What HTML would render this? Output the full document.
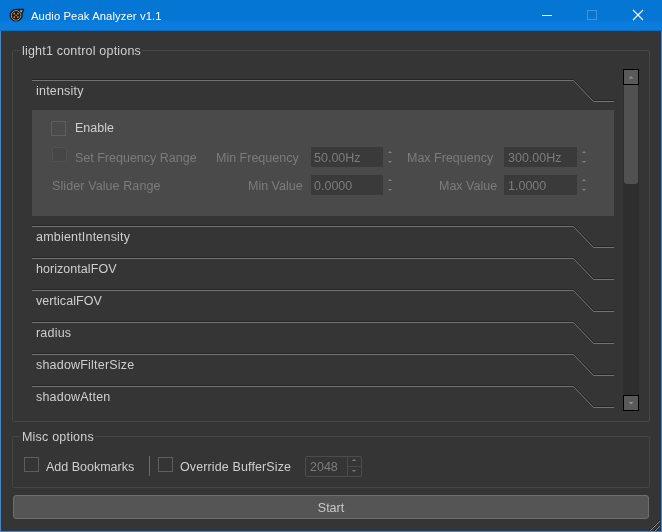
<!DOCTYPE html>
<html><head><meta charset="utf-8">
<style>
*{box-sizing:border-box;margin:0;padding:0}
html,body{width:662px;height:532px;overflow:hidden;background:#353535}
body{position:relative;font-family:"Liberation Sans",sans-serif;font-size:12.5px;color:#cfcfcf}
.a{position:absolute}
.t{position:absolute;white-space:nowrap;line-height:15px;will-change:transform}
.ls{letter-spacing:0.2px}
.dis{color:#7c7c7c}
#titlebar{left:0;top:0;width:662px;height:31px;background:linear-gradient(#0676d5 0,#0676d5 18px,#0a7ddf 24px,#0a7ddf 30px,#145a90 31px)}
#title{left:31px;top:5.5px;color:#fff;font-size:11.25px;line-height:20px;letter-spacing:0.1px}
.bl{background:#4e4e4e}
.hl{background:#8a8a8a}
.cb{position:absolute;width:15px;height:15px;border:1px solid #5e5e5e}
.spin{position:absolute;background:#3a3a3a;color:#8c8c8c}
.arr{position:absolute;width:0;height:0;border-left:2px solid transparent;border-right:2px solid transparent}
.up{border-bottom:2px solid #808080}
.dn{border-top:2px solid #808080}
</style></head><body>
<!-- window borders -->
<div class="a" style="left:0;top:0;width:1px;height:532px;background:#4a86bc"></div>
<div class="a" style="left:1px;top:31px;width:1px;height:500px;background:#1c3a58"></div>
<div class="a" style="left:661px;top:0;width:1px;height:532px;background:#4a86bc"></div>
<div class="a" style="left:660px;top:31px;width:1px;height:500px;background:#1c3a58"></div>
<div class="a" style="left:0;top:531px;width:662px;height:1px;background:#4a86bc"></div>
<div class="a" style="left:1px;top:530px;width:660px;height:1px;background:#1c3a58"></div>
<!-- title bar -->
<div id="titlebar" class="a"></div>
<svg class="a" style="left:0;top:0" width="30" height="30" viewBox="0 0 30 30">
  <path d="M9.6 15.6 C9.6 11.7 12.5 8.8 16.2 8.8 L24.2 8.8 C24.1 10.8 23.4 12.2 22.5 13.4 C22.7 14.1 22.7 14.8 22.7 15.6 C22.7 19.2 19.7 21.6 16.1 21.6 C12.5 21.6 9.6 19.2 9.6 15.6 Z" fill="#0b1a30"/>
  <circle cx="16.1" cy="15.4" r="4.7" fill="none" stroke="#b4ae94" stroke-width="1"/>
  <path d="M19.5 10.6 L22.6 10.2 L21.3 12.6 Z" fill="#d8c8a0"/>
  <circle cx="16.1" cy="15.4" r="4.2" fill="#22160a"/>
  <circle cx="14.3" cy="13.7" r="0.85" fill="#d89a40"/><circle cx="17.9" cy="13.7" r="0.85" fill="#d89a40"/>
  <circle cx="14.3" cy="17.1" r="0.85" fill="#d89a40"/><circle cx="17.9" cy="17.1" r="0.85" fill="#d89a40"/>
  <circle cx="16.1" cy="15.4" r="0.75" fill="#d89838"/>
</svg>
<div id="title" class="t">Audio Peak Analyzer v1.1</div>
<!-- min / max / close -->
<div class="a" style="left:542px;top:15px;width:10px;height:1px;background:#fff"></div>
<div class="a" style="left:587px;top:10px;width:10px;height:10px;border:1px solid #3f95de"></div>
<svg class="a" style="left:632px;top:9px" width="12" height="12" viewBox="0 0 12 12"><path d="M1 1 L11 11 M11 1 L1 11" stroke="#fff" stroke-width="1.1"/></svg>

<!-- group 1 frame -->
<div class="a" style="left:12px;top:50px;width:638px;height:372px;border:1px solid #464646;border-radius:2px"></div>
<div class="a" style="left:20px;top:46px;width:122px;height:8px;background:#353535"></div>
<div class="t ls" style="left:22px;top:44px">light1 control options</div>

<!-- headers -->
<svg class="a" style="left:0;top:0" width="662" height="532">
  <g fill="none" stroke="#262626" stroke-width="1"><path d="M32 79.5 H573.5 L594 100.5 H614"/><path d="M32 225.5 H573.5 L594 246.5 H614"/><path d="M32 257.5 H573.5 L594 278.5 H614"/><path d="M32 289.5 H573.5 L594 310.5 H614"/><path d="M32 321.5 H573.5 L594 342.5 H614"/><path d="M32 353.5 H573.5 L594 374.5 H614"/><path d="M32 385.5 H573.5 L594 406.5 H614"/></g>
  <g fill="none" stroke="#727272" stroke-width="1"><path d="M32 80.5 H573.5 L593.5 101.5 H614"/><path d="M32 226.5 H573.5 L593.5 247.5 H614"/><path d="M32 258.5 H573.5 L593.5 279.5 H614"/><path d="M32 290.5 H573.5 L593.5 311.5 H614"/><path d="M32 322.5 H573.5 L593.5 343.5 H614"/><path d="M32 354.5 H573.5 L593.5 375.5 H614"/><path d="M32 386.5 H573.5 L593.5 407.5 H614"/></g>
</svg>
<div class="t ls" style="left:36px;top:84px">intensity</div>
<div class="t ls" style="left:36px;top:230px">ambientIntensity</div>
<div class="t" style="left:36px;top:262px;letter-spacing:0.05px">horizontalFOV</div>
<div class="t" style="left:36px;top:294px;letter-spacing:0.05px">verticalFOV</div>
<div class="t ls" style="left:36px;top:326px">radius</div>
<div class="t ls" style="left:36px;top:358px">shadowFilterSize</div>
<div class="t ls" style="left:36px;top:390px">shadowAtten</div>

<!-- intensity panel -->
<div class="a" style="left:32px;top:110px;width:582px;height:106px;background:#4a4a4a"></div>
<div class="cb" style="left:51px;top:121px"></div>
<div class="t" style="left:75px;top:121px">Enable</div>
<div class="cb" style="left:52px;top:147px;background:#464646;border-color:#525252;border-radius:2px"></div>
<div class="t dis" style="left:75px;top:151px">Set Frequency Range</div>
<div class="t dis" style="left:216px;top:151px">Min Frequency</div>
<div class="spin" style="left:311px;top:147px;width:72px;height:20px"></div>
<div class="t dis" style="left:314px;top:151px">50.00Hz</div>
<div class="arr up" style="left:388px;top:151px"></div>
<div class="arr dn" style="left:388px;top:161px"></div>
<div class="t dis" style="left:407px;top:151px">Max Frequency</div>
<div class="spin" style="left:504px;top:147px;width:73px;height:20px"></div>
<div class="t dis" style="left:508px;top:151px">300.00Hz</div>
<div class="arr up" style="left:582px;top:151px"></div>
<div class="arr dn" style="left:582px;top:161px"></div>

<div class="t dis" style="left:52px;top:179px;letter-spacing:0.1px">Slider Value Range</div>
<div class="t dis" style="left:248px;top:179px">Min Value</div>
<div class="spin" style="left:311px;top:175px;width:72px;height:20px"></div>
<div class="t dis" style="left:314px;top:179px">0.0000</div>
<div class="arr up" style="left:388px;top:179px"></div>
<div class="arr dn" style="left:388px;top:189px"></div>
<div class="t dis" style="left:439px;top:179px">Max Value</div>
<div class="spin" style="left:504px;top:175px;width:73px;height:20px"></div>
<div class="t dis" style="left:508px;top:179px">1.0000</div>
<div class="arr up" style="left:582px;top:179px"></div>
<div class="arr dn" style="left:582px;top:189px"></div>

<!-- scrollbar -->
<div class="a" style="left:623px;top:69px;width:16px;height:342px;background:#2e2e2e"></div>
<div class="a" style="left:624px;top:84px;width:14px;height:100px;background:#515151;border-radius:0 0 3px 3px"></div>
<div class="a" style="left:623px;top:69px;width:16px;height:16px;background:#5a5a5a;border:1px solid #000"></div>
<svg class="a" style="left:623px;top:69px" width="16" height="16"><path d="M5.5 9.5 L8 7 L10.5 9.5 Z" fill="#8e8e8e"/></svg>
<div class="a" style="left:623px;top:395px;width:16px;height:16px;background:#5a5a5a;border:1px solid #000"></div>
<svg class="a" style="left:623px;top:395px" width="16" height="16"><path d="M5.5 7 L8 9.5 L10.5 7 Z" fill="#8e8e8e"/></svg>

<!-- misc group -->
<div class="a" style="left:12px;top:436px;width:638px;height:52px;border:1px solid #464646;border-radius:2px"></div>
<div class="a" style="left:20px;top:432px;width:75px;height:8px;background:#353535"></div>
<div class="t ls" style="left:22px;top:430px">Misc options</div>
<div class="cb" style="left:24px;top:457px"></div>
<div class="t" style="left:46px;top:460px">Add Bookmarks</div>
<div class="a" style="left:149px;top:456px;width:1px;height:20px;background:#6a6a6a"></div>
<div class="cb" style="left:158px;top:457px"></div>
<div class="t" style="left:180px;top:460px;letter-spacing:0.12px">Override BufferSize</div>
<div class="a" style="left:305px;top:456px;width:57px;height:21px;border:1px solid #4c4c4c;border-radius:2px"></div>
<div class="a" style="left:347px;top:456px;width:1px;height:21px;background:#4a4a4a"></div>
<div class="a" style="left:347px;top:466px;width:15px;height:1px;background:#4a4a4a"></div>
<div class="t dis" style="left:310px;top:460px">2048</div>
<div class="arr up" style="left:352px;top:459px"></div>
<div class="arr dn" style="left:352px;top:470px"></div>

<!-- start button -->
<div class="a" style="left:13px;top:495px;width:636px;height:24px;background:#555555;border:1px solid #6e6e6e;border-radius:3px"></div>
<div class="t" style="left:0;top:501px;width:662px;text-align:center;color:#c8c8c8">Start</div>
<svg class="a" style="left:640px;top:510px" width="22" height="22"><g stroke-width="1" fill="none">
<path d="M9 21 L20 10" stroke="#202020"/><path d="M10 21 L20 11" stroke="#8a8a8a"/>
<path d="M14 21 L20 15" stroke="#202020"/><path d="M15 21 L20 16" stroke="#8a8a8a"/>
</g></svg>
</body></html>
